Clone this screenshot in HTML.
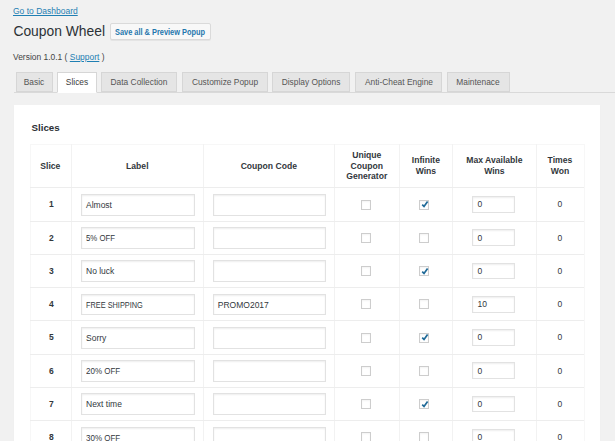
<!DOCTYPE html>
<html><head><meta charset="utf-8"><title>Coupon Wheel</title>
<style>
html,body{margin:0;padding:0;}
body{width:615px;height:441px;overflow:hidden;background:#f1f1f1;position:relative;font-family:"Liberation Sans", sans-serif;}
.t{position:absolute;white-space:nowrap;}
.b{position:absolute;box-sizing:border-box;}
u{text-decoration:underline;text-decoration-thickness:0.8px;text-underline-offset:0.6px;}
</style></head><body>
<div class="t" style="left:13.00px;top:6.64px;font-size:8.5px;line-height:8.5px;color:#1f7fb3;font-weight:normal;"><u>Go to Dashboard</u></div>
<div class="t" style="left:13.40px;top:25.10px;font-size:13.85px;line-height:13.85px;color:#2c3136;font-weight:normal;">Coupon Wheel</div>
<div class="b" style="left:110.3px;top:23.4px;width:100.5px;height:16.2px;background:#f8f8f8;border:1px solid #dadada;border-radius:2px;box-shadow:0 1px 0 #e4e4e4;"></div>
<div class="t" style="left:115.30px;top:27.66px;font-size:8.6px;line-height:8.6px;color:#1f77ad;font-weight:bold;transform:scaleX(0.86);transform-origin:0 0;">Save all &amp; Preview Popup</div>
<div class="t" style="left:13.00px;top:53.18px;font-size:8.45px;line-height:8.45px;color:#444;font-weight:normal;">Version 1.0.1 ( <u style="color:#1f7fb3">Support</u> )</div>
<div class="b" style="left:13.8px;top:92px;width:602px;height:1px;background:#d9d9d9;"></div>
<div class="b" style="left:15.8px;top:72px;width:37.00px;height:20px;background:#e5e5e5;border:1px solid #d6d6d6;"></div>
<div class="t" style="left:-165.70px;width:400px;text-align:center;top:77.84px;font-size:8.988px;line-height:8.988px;color:#555;font-weight:normal;transform:scaleX(0.9346);transform-origin:50% 0;">Basic</div>
<div class="b" style="left:57.2px;top:72px;width:39.60px;height:20.6px;background:#ffffff;border:1px solid #d6d6d6;border-bottom-color:#fff;"></div>
<div class="t" style="left:-123.00px;width:400px;text-align:center;top:77.84px;font-size:8.988px;line-height:8.988px;color:#3c3c3c;font-weight:normal;transform:scaleX(0.9346);transform-origin:50% 0;">Slices</div>
<div class="b" style="left:101.2px;top:72px;width:76.20px;height:20px;background:#e5e5e5;border:1px solid #d6d6d6;"></div>
<div class="t" style="left:-60.70px;width:400px;text-align:center;top:77.84px;font-size:8.988px;line-height:8.988px;color:#555;font-weight:normal;transform:scaleX(0.9346);transform-origin:50% 0;">Data Collection</div>
<div class="b" style="left:182px;top:72px;width:86.20px;height:20px;background:#e5e5e5;border:1px solid #d6d6d6;"></div>
<div class="t" style="left:25.10px;width:400px;text-align:center;top:77.84px;font-size:8.988px;line-height:8.988px;color:#555;font-weight:normal;transform:scaleX(0.9346);transform-origin:50% 0;">Customize Popup</div>
<div class="b" style="left:272px;top:72px;width:78.20px;height:20px;background:#e5e5e5;border:1px solid #d6d6d6;"></div>
<div class="t" style="left:111.10px;width:400px;text-align:center;top:77.84px;font-size:8.988px;line-height:8.988px;color:#555;font-weight:normal;transform:scaleX(0.9346);transform-origin:50% 0;">Display Options</div>
<div class="b" style="left:355.2px;top:72px;width:87.30px;height:20px;background:#e5e5e5;border:1px solid #d6d6d6;"></div>
<div class="t" style="left:198.85px;width:400px;text-align:center;top:77.84px;font-size:8.988px;line-height:8.988px;color:#555;font-weight:normal;transform:scaleX(0.9346);transform-origin:50% 0;">Anti-Cheat Engine</div>
<div class="b" style="left:447px;top:72px;width:62.70px;height:20px;background:#e5e5e5;border:1px solid #d6d6d6;"></div>
<div class="t" style="left:278.35px;width:400px;text-align:center;top:77.84px;font-size:8.988px;line-height:8.988px;color:#555;font-weight:normal;transform:scaleX(0.9346);transform-origin:50% 0;">Maintenace</div>
<div class="b" style="left:14px;top:104.5px;width:586px;height:400px;background:#fff;box-shadow:0 1px 1px rgba(0,0,0,.04);"></div>
<div class="t" style="left:31.50px;top:123.40px;font-size:9.75px;line-height:9.75px;color:#2a2e33;font-weight:bold;">Slices</div>
<div class="b" style="left:29.5px;top:144.3px;width:555.00px;height:400px;border:1px solid #f7f7f7;"></div>
<div class="b" style="left:71.20px;top:144.3px;width:1px;height:400px;background:#f2f2f2;"></div>
<div class="b" style="left:203.40px;top:144.3px;width:1px;height:400px;background:#f2f2f2;"></div>
<div class="b" style="left:334.20px;top:144.3px;width:1px;height:400px;background:#f2f2f2;"></div>
<div class="b" style="left:399.40px;top:144.3px;width:1px;height:400px;background:#f2f2f2;"></div>
<div class="b" style="left:452.40px;top:144.3px;width:1px;height:400px;background:#f2f2f2;"></div>
<div class="b" style="left:536.40px;top:144.3px;width:1px;height:400px;background:#f2f2f2;"></div>
<div class="b" style="left:29.5px;top:187.40px;width:554.00px;height:1px;background:#ededed;"></div>
<div class="b" style="left:29.5px;top:220.65px;width:554.00px;height:1px;background:#ededed;"></div>
<div class="b" style="left:29.5px;top:253.90px;width:554.00px;height:1px;background:#ededed;"></div>
<div class="b" style="left:29.5px;top:287.15px;width:554.00px;height:1px;background:#ededed;"></div>
<div class="b" style="left:29.5px;top:320.40px;width:554.00px;height:1px;background:#ededed;"></div>
<div class="b" style="left:29.5px;top:353.65px;width:554.00px;height:1px;background:#ededed;"></div>
<div class="b" style="left:29.5px;top:386.90px;width:554.00px;height:1px;background:#ededed;"></div>
<div class="b" style="left:29.5px;top:420.15px;width:554.00px;height:1px;background:#ededed;"></div>
<div class="t" style="left:-149.65px;width:400px;text-align:center;top:161.76px;font-size:8.6px;line-height:8.6px;color:#32373c;font-weight:bold;">Slice</div>
<div class="t" style="left:-62.70px;width:400px;text-align:center;top:161.76px;font-size:8.6px;line-height:8.6px;color:#32373c;font-weight:bold;">Label</div>
<div class="t" style="left:68.80px;width:400px;text-align:center;top:161.76px;font-size:8.6px;line-height:8.6px;color:#32373c;font-weight:bold;">Coupon Code</div>
<div class="t" style="left:166.80px;width:400px;text-align:center;top:151.16px;font-size:8.6px;line-height:8.6px;color:#32373c;font-weight:bold;">Unique</div>
<div class="t" style="left:166.80px;width:400px;text-align:center;top:161.76px;font-size:8.6px;line-height:8.6px;color:#32373c;font-weight:bold;">Coupon</div>
<div class="t" style="left:166.80px;width:400px;text-align:center;top:172.36px;font-size:8.6px;line-height:8.6px;color:#32373c;font-weight:bold;">Generator</div>
<div class="t" style="left:225.90px;width:400px;text-align:center;top:156.46px;font-size:8.6px;line-height:8.6px;color:#32373c;font-weight:bold;">Infinite</div>
<div class="t" style="left:225.90px;width:400px;text-align:center;top:167.06px;font-size:8.6px;line-height:8.6px;color:#32373c;font-weight:bold;">Wins</div>
<div class="t" style="left:294.40px;width:400px;text-align:center;top:156.46px;font-size:8.6px;line-height:8.6px;color:#32373c;font-weight:bold;">Max Available</div>
<div class="t" style="left:294.40px;width:400px;text-align:center;top:167.06px;font-size:8.6px;line-height:8.6px;color:#32373c;font-weight:bold;">Wins</div>
<div class="t" style="left:359.95px;width:400px;text-align:center;top:156.46px;font-size:8.6px;line-height:8.6px;color:#32373c;font-weight:bold;">Times</div>
<div class="t" style="left:359.95px;width:400px;text-align:center;top:167.06px;font-size:8.6px;line-height:8.6px;color:#32373c;font-weight:bold;">Won</div>
<div class="t" style="left:-148.65px;width:400px;text-align:center;top:200.47px;font-size:8.5px;line-height:8.5px;color:#32373c;font-weight:bold;">1</div>
<div class="b" style="left:81.3px;top:193.93px;width:113.6px;height:21.8px;background:#fff;border:1px solid #e2e2e2;box-shadow:inset 0 1px 2px rgba(0,0,0,.07);"></div>
<div class="t" style="left:86.00px;top:200.87px;font-size:8.5px;line-height:8.5px;color:#32373c;font-weight:normal;">Almost</div>
<div class="b" style="left:213.2px;top:193.93px;width:112.5px;height:21.8px;background:#fff;border:1px solid #e2e2e2;box-shadow:inset 0 1px 2px rgba(0,0,0,.07);"></div>
<div class="b" style="left:361.05px;top:199.73px;width:10px;height:9.9px;background:#fff;border:1px solid #cdcdcd;box-shadow:inset 0 1px 2px rgba(0,0,0,.05);"></div>
<div class="b" style="left:419.35px;top:199.73px;width:10px;height:9.9px;background:#fff;border:1px solid #cdcdcd;box-shadow:inset 0 1px 2px rgba(0,0,0,.05);"></div>
<svg style="position:absolute;left:419.40px;top:200.03px" width="10" height="10" viewBox="0 0 10 10"><path d="M3.2 4.7 L5.0 6.45 L8.6 1.4" fill="none" stroke="#1f6a98" stroke-width="1.7"/></svg>
<div class="b" style="left:472.2px;top:196.13px;width:42.4px;height:16.8px;background:#fff;border:1px solid #e2e2e2;box-shadow:inset 0 1px 2px rgba(0,0,0,.07);"></div>
<div class="t" style="left:477.60px;top:200.47px;font-size:8.5px;line-height:8.5px;color:#32373c;font-weight:normal;">0</div>
<div class="t" style="left:359.95px;width:400px;text-align:center;top:200.47px;font-size:8.5px;line-height:8.5px;color:#32373c;font-weight:normal;">0</div>
<div class="t" style="left:-148.65px;width:400px;text-align:center;top:233.72px;font-size:8.5px;line-height:8.5px;color:#32373c;font-weight:bold;">2</div>
<div class="b" style="left:81.3px;top:227.18px;width:113.6px;height:21.8px;background:#fff;border:1px solid #e2e2e2;box-shadow:inset 0 1px 2px rgba(0,0,0,.07);"></div>
<div class="t" style="left:86.00px;top:234.12px;font-size:8.5px;line-height:8.5px;color:#32373c;font-weight:normal;transform:scaleX(0.92);transform-origin:0 0;">5% OFF</div>
<div class="b" style="left:213.2px;top:227.18px;width:112.5px;height:21.8px;background:#fff;border:1px solid #e2e2e2;box-shadow:inset 0 1px 2px rgba(0,0,0,.07);"></div>
<div class="b" style="left:361.05px;top:232.98px;width:10px;height:9.9px;background:#fff;border:1px solid #cdcdcd;box-shadow:inset 0 1px 2px rgba(0,0,0,.05);"></div>
<div class="b" style="left:419.35px;top:232.98px;width:10px;height:9.9px;background:#fff;border:1px solid #cdcdcd;box-shadow:inset 0 1px 2px rgba(0,0,0,.05);"></div>
<div class="b" style="left:472.2px;top:229.38px;width:42.4px;height:16.8px;background:#fff;border:1px solid #e2e2e2;box-shadow:inset 0 1px 2px rgba(0,0,0,.07);"></div>
<div class="t" style="left:477.60px;top:233.72px;font-size:8.5px;line-height:8.5px;color:#32373c;font-weight:normal;">0</div>
<div class="t" style="left:359.95px;width:400px;text-align:center;top:233.72px;font-size:8.5px;line-height:8.5px;color:#32373c;font-weight:normal;">0</div>
<div class="t" style="left:-148.65px;width:400px;text-align:center;top:266.97px;font-size:8.5px;line-height:8.5px;color:#32373c;font-weight:bold;">3</div>
<div class="b" style="left:81.3px;top:260.43px;width:113.6px;height:21.8px;background:#fff;border:1px solid #e2e2e2;box-shadow:inset 0 1px 2px rgba(0,0,0,.07);"></div>
<div class="t" style="left:86.00px;top:267.37px;font-size:8.5px;line-height:8.5px;color:#32373c;font-weight:normal;">No luck</div>
<div class="b" style="left:213.2px;top:260.43px;width:112.5px;height:21.8px;background:#fff;border:1px solid #e2e2e2;box-shadow:inset 0 1px 2px rgba(0,0,0,.07);"></div>
<div class="b" style="left:361.05px;top:266.22px;width:10px;height:9.9px;background:#fff;border:1px solid #cdcdcd;box-shadow:inset 0 1px 2px rgba(0,0,0,.05);"></div>
<div class="b" style="left:419.35px;top:266.22px;width:10px;height:9.9px;background:#fff;border:1px solid #cdcdcd;box-shadow:inset 0 1px 2px rgba(0,0,0,.05);"></div>
<svg style="position:absolute;left:419.40px;top:266.52px" width="10" height="10" viewBox="0 0 10 10"><path d="M3.2 4.7 L5.0 6.45 L8.6 1.4" fill="none" stroke="#1f6a98" stroke-width="1.7"/></svg>
<div class="b" style="left:472.2px;top:262.62px;width:42.4px;height:16.8px;background:#fff;border:1px solid #e2e2e2;box-shadow:inset 0 1px 2px rgba(0,0,0,.07);"></div>
<div class="t" style="left:477.60px;top:266.97px;font-size:8.5px;line-height:8.5px;color:#32373c;font-weight:normal;">0</div>
<div class="t" style="left:359.95px;width:400px;text-align:center;top:266.97px;font-size:8.5px;line-height:8.5px;color:#32373c;font-weight:normal;">0</div>
<div class="t" style="left:-148.65px;width:400px;text-align:center;top:300.22px;font-size:8.5px;line-height:8.5px;color:#32373c;font-weight:bold;">4</div>
<div class="b" style="left:81.3px;top:293.68px;width:113.6px;height:21.8px;background:#fff;border:1px solid #e2e2e2;box-shadow:inset 0 1px 2px rgba(0,0,0,.07);"></div>
<div class="t" style="left:86.00px;top:300.62px;font-size:8.5px;line-height:8.5px;color:#32373c;font-weight:normal;transform:scaleX(0.865);transform-origin:0 0;">FREE SHIPPING</div>
<div class="b" style="left:213.2px;top:293.68px;width:112.5px;height:21.8px;background:#fff;border:1px solid #e2e2e2;box-shadow:inset 0 1px 2px rgba(0,0,0,.07);"></div>
<div class="t" style="left:217.80px;top:300.62px;font-size:8.5px;line-height:8.5px;color:#32373c;font-weight:normal;">PROMO2017</div>
<div class="b" style="left:361.05px;top:299.47px;width:10px;height:9.9px;background:#fff;border:1px solid #cdcdcd;box-shadow:inset 0 1px 2px rgba(0,0,0,.05);"></div>
<div class="b" style="left:419.35px;top:299.47px;width:10px;height:9.9px;background:#fff;border:1px solid #cdcdcd;box-shadow:inset 0 1px 2px rgba(0,0,0,.05);"></div>
<div class="b" style="left:472.2px;top:295.88px;width:42.4px;height:16.8px;background:#fff;border:1px solid #e2e2e2;box-shadow:inset 0 1px 2px rgba(0,0,0,.07);"></div>
<div class="t" style="left:477.60px;top:300.22px;font-size:8.5px;line-height:8.5px;color:#32373c;font-weight:normal;">10</div>
<div class="t" style="left:359.95px;width:400px;text-align:center;top:300.22px;font-size:8.5px;line-height:8.5px;color:#32373c;font-weight:normal;">0</div>
<div class="t" style="left:-148.65px;width:400px;text-align:center;top:333.47px;font-size:8.5px;line-height:8.5px;color:#32373c;font-weight:bold;">5</div>
<div class="b" style="left:81.3px;top:326.93px;width:113.6px;height:21.8px;background:#fff;border:1px solid #e2e2e2;box-shadow:inset 0 1px 2px rgba(0,0,0,.07);"></div>
<div class="t" style="left:86.00px;top:333.87px;font-size:8.5px;line-height:8.5px;color:#32373c;font-weight:normal;">Sorry</div>
<div class="b" style="left:213.2px;top:326.93px;width:112.5px;height:21.8px;background:#fff;border:1px solid #e2e2e2;box-shadow:inset 0 1px 2px rgba(0,0,0,.07);"></div>
<div class="b" style="left:361.05px;top:332.72px;width:10px;height:9.9px;background:#fff;border:1px solid #cdcdcd;box-shadow:inset 0 1px 2px rgba(0,0,0,.05);"></div>
<div class="b" style="left:419.35px;top:332.72px;width:10px;height:9.9px;background:#fff;border:1px solid #cdcdcd;box-shadow:inset 0 1px 2px rgba(0,0,0,.05);"></div>
<svg style="position:absolute;left:419.40px;top:333.02px" width="10" height="10" viewBox="0 0 10 10"><path d="M3.2 4.7 L5.0 6.45 L8.6 1.4" fill="none" stroke="#1f6a98" stroke-width="1.7"/></svg>
<div class="b" style="left:472.2px;top:329.12px;width:42.4px;height:16.8px;background:#fff;border:1px solid #e2e2e2;box-shadow:inset 0 1px 2px rgba(0,0,0,.07);"></div>
<div class="t" style="left:477.60px;top:333.47px;font-size:8.5px;line-height:8.5px;color:#32373c;font-weight:normal;">0</div>
<div class="t" style="left:359.95px;width:400px;text-align:center;top:333.47px;font-size:8.5px;line-height:8.5px;color:#32373c;font-weight:normal;">0</div>
<div class="t" style="left:-148.65px;width:400px;text-align:center;top:366.72px;font-size:8.5px;line-height:8.5px;color:#32373c;font-weight:bold;">6</div>
<div class="b" style="left:81.3px;top:360.18px;width:113.6px;height:21.8px;background:#fff;border:1px solid #e2e2e2;box-shadow:inset 0 1px 2px rgba(0,0,0,.07);"></div>
<div class="t" style="left:86.00px;top:367.12px;font-size:8.5px;line-height:8.5px;color:#32373c;font-weight:normal;transform:scaleX(0.94);transform-origin:0 0;">20% OFF</div>
<div class="b" style="left:213.2px;top:360.18px;width:112.5px;height:21.8px;background:#fff;border:1px solid #e2e2e2;box-shadow:inset 0 1px 2px rgba(0,0,0,.07);"></div>
<div class="b" style="left:361.05px;top:365.97px;width:10px;height:9.9px;background:#fff;border:1px solid #cdcdcd;box-shadow:inset 0 1px 2px rgba(0,0,0,.05);"></div>
<div class="b" style="left:419.35px;top:365.97px;width:10px;height:9.9px;background:#fff;border:1px solid #cdcdcd;box-shadow:inset 0 1px 2px rgba(0,0,0,.05);"></div>
<div class="b" style="left:472.2px;top:362.38px;width:42.4px;height:16.8px;background:#fff;border:1px solid #e2e2e2;box-shadow:inset 0 1px 2px rgba(0,0,0,.07);"></div>
<div class="t" style="left:477.60px;top:366.72px;font-size:8.5px;line-height:8.5px;color:#32373c;font-weight:normal;">0</div>
<div class="t" style="left:359.95px;width:400px;text-align:center;top:366.72px;font-size:8.5px;line-height:8.5px;color:#32373c;font-weight:normal;">0</div>
<div class="t" style="left:-148.65px;width:400px;text-align:center;top:399.97px;font-size:8.5px;line-height:8.5px;color:#32373c;font-weight:bold;">7</div>
<div class="b" style="left:81.3px;top:393.43px;width:113.6px;height:21.8px;background:#fff;border:1px solid #e2e2e2;box-shadow:inset 0 1px 2px rgba(0,0,0,.07);"></div>
<div class="t" style="left:86.00px;top:400.37px;font-size:8.5px;line-height:8.5px;color:#32373c;font-weight:normal;">Next time</div>
<div class="b" style="left:213.2px;top:393.43px;width:112.5px;height:21.8px;background:#fff;border:1px solid #e2e2e2;box-shadow:inset 0 1px 2px rgba(0,0,0,.07);"></div>
<div class="b" style="left:361.05px;top:399.22px;width:10px;height:9.9px;background:#fff;border:1px solid #cdcdcd;box-shadow:inset 0 1px 2px rgba(0,0,0,.05);"></div>
<div class="b" style="left:419.35px;top:399.22px;width:10px;height:9.9px;background:#fff;border:1px solid #cdcdcd;box-shadow:inset 0 1px 2px rgba(0,0,0,.05);"></div>
<svg style="position:absolute;left:419.40px;top:399.52px" width="10" height="10" viewBox="0 0 10 10"><path d="M3.2 4.7 L5.0 6.45 L8.6 1.4" fill="none" stroke="#1f6a98" stroke-width="1.7"/></svg>
<div class="b" style="left:472.2px;top:395.62px;width:42.4px;height:16.8px;background:#fff;border:1px solid #e2e2e2;box-shadow:inset 0 1px 2px rgba(0,0,0,.07);"></div>
<div class="t" style="left:477.60px;top:399.97px;font-size:8.5px;line-height:8.5px;color:#32373c;font-weight:normal;">0</div>
<div class="t" style="left:359.95px;width:400px;text-align:center;top:399.97px;font-size:8.5px;line-height:8.5px;color:#32373c;font-weight:normal;">0</div>
<div class="t" style="left:-148.65px;width:400px;text-align:center;top:433.22px;font-size:8.5px;line-height:8.5px;color:#32373c;font-weight:bold;">8</div>
<div class="b" style="left:81.3px;top:426.68px;width:113.6px;height:21.8px;background:#fff;border:1px solid #e2e2e2;box-shadow:inset 0 1px 2px rgba(0,0,0,.07);"></div>
<div class="t" style="left:86.00px;top:433.62px;font-size:8.5px;line-height:8.5px;color:#32373c;font-weight:normal;transform:scaleX(0.94);transform-origin:0 0;">30% OFF</div>
<div class="b" style="left:213.2px;top:426.68px;width:112.5px;height:21.8px;background:#fff;border:1px solid #e2e2e2;box-shadow:inset 0 1px 2px rgba(0,0,0,.07);"></div>
<div class="b" style="left:361.05px;top:432.47px;width:10px;height:9.9px;background:#fff;border:1px solid #cdcdcd;box-shadow:inset 0 1px 2px rgba(0,0,0,.05);"></div>
<div class="b" style="left:419.35px;top:432.47px;width:10px;height:9.9px;background:#fff;border:1px solid #cdcdcd;box-shadow:inset 0 1px 2px rgba(0,0,0,.05);"></div>
<div class="b" style="left:472.2px;top:428.88px;width:42.4px;height:16.8px;background:#fff;border:1px solid #e2e2e2;box-shadow:inset 0 1px 2px rgba(0,0,0,.07);"></div>
<div class="t" style="left:477.60px;top:433.22px;font-size:8.5px;line-height:8.5px;color:#32373c;font-weight:normal;">0</div>
<div class="t" style="left:359.95px;width:400px;text-align:center;top:433.22px;font-size:8.5px;line-height:8.5px;color:#32373c;font-weight:normal;">0</div>
</body></html>
